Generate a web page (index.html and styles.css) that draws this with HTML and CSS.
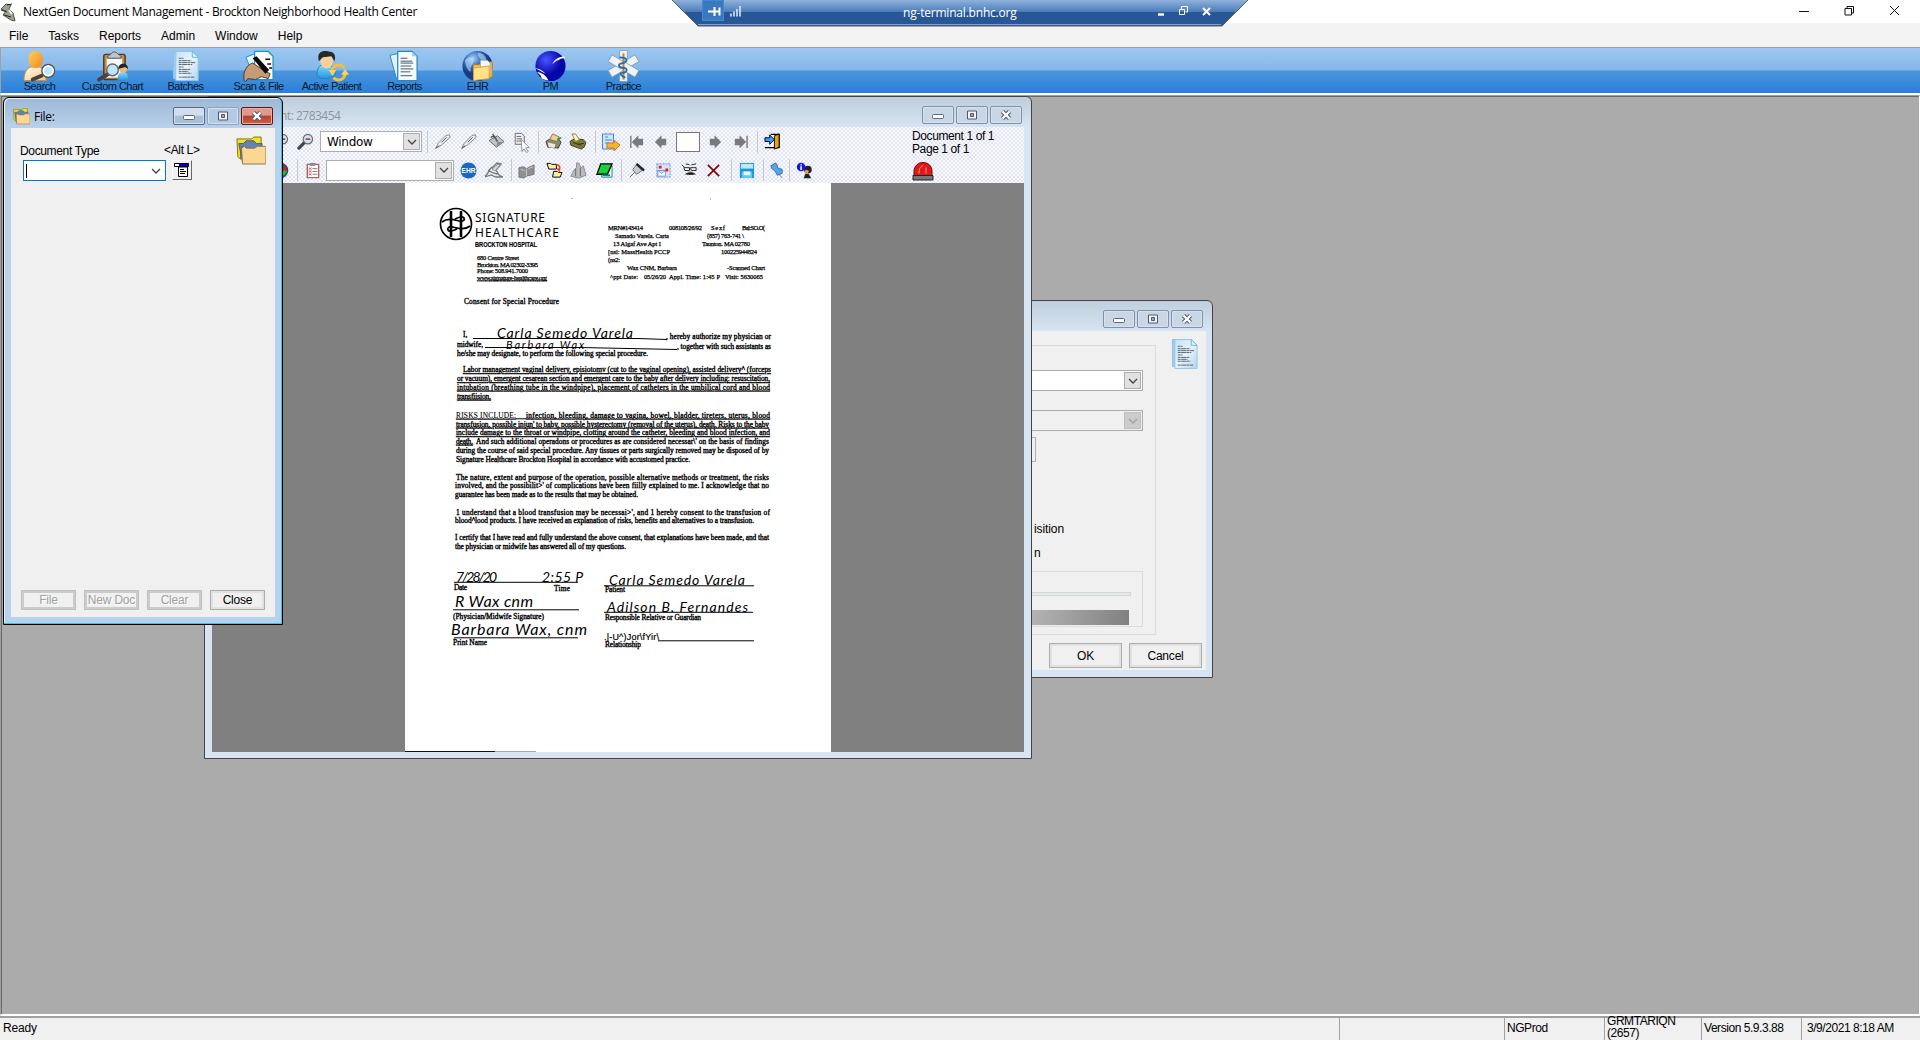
FILE: index.html
```html
<!DOCTYPE html>
<html lang="en">
<head>
<meta charset="utf-8">
<title>NextGen Document Management</title>
<link rel="stylesheet" href="styles.css">
</head>
<body>
<svg class="defs" aria-hidden="true">
  <defs>
    <linearGradient id="gold" x1="0" y1="0" x2="1" y2="1"><stop offset="0" stop-color="#ffd060"/><stop offset="1" stop-color="#f08a1c"/></linearGradient>
    <linearGradient id="cream" x1="0" y1="0" x2="1" y2="1"><stop offset="0" stop-color="#fff"/><stop offset="1" stop-color="#ffc070"/></linearGradient>
    <linearGradient id="paper" x1="0" y1="0" x2="1" y2="1"><stop offset="0" stop-color="#c4e2f6"/><stop offset=".5" stop-color="#e8f4fb"/><stop offset="1" stop-color="#b4d4ec"/></linearGradient>
    <linearGradient id="shirt" x1="0" y1="0" x2="0" y2="1"><stop offset="0" stop-color="#8fdcff"/><stop offset="1" stop-color="#2196dd"/></linearGradient>
    <radialGradient id="globe" cx=".35" cy=".25"><stop offset="0" stop-color="#a5d4fa"/><stop offset=".5" stop-color="#3c74c4"/><stop offset="1" stop-color="#173a86"/></radialGradient>
    <radialGradient id="ball" cx=".35" cy=".3"><stop offset="0" stop-color="#4a55ff"/><stop offset="1" stop-color="#0606a8"/></radialGradient>
    <symbol id="chev" viewBox="0 0 10 10"><path d="M1 3l4 4 4-4" fill="none" stroke="currentColor" stroke-width="1.3"/></symbol>
    <symbol id="lens" viewBox="0 0 18 18"><path d="M8 10l-6 6" stroke="#444" stroke-width="3.4" stroke-linecap="round"/><circle cx="11.500" cy="6.500" r="5" fill="#c4e6f8" stroke="#666" stroke-width="1.2"/></symbol>
    <symbol id="doc" viewBox="0 0 28 32"><path d="M1.500 1h20v28h-20z" fill="#9fcdee" stroke="#8cc0e6"/><path d="M4 1h17l6 6v24H4z" fill="url(#paper)" stroke="#8fc6ea"/><path d="M21 1v6h6z" fill="#eaf7ff" stroke="#5ab6e8"/><path d="M7 8h5M7 10.500h13M7 12.500h17M7 14.500h14M7 17h5M7 19.500h12M7 21.500h10M7 23.500h13M7 27.500h16" stroke="#4a525a" stroke-width=".9" stroke-dasharray="3 .5 5 .4"/></symbol>
    <symbol id="folders" viewBox="0 0 32 32"><path d="M1 3h16l2-2h8v9H5v15l-3-3z" fill="#f2e418" stroke="#77700d"/><path d="M3 8l5 0 3-3h8l3 3h6v8l-3 12H7z" fill="#6480b4" stroke="#4b587a"/><path d="M5 11h5v3H7v14z" fill="#8c6a3b"/><path d="M6 13l1 17h25V11h-9l-3 2h-9l-2-2z" fill="#fad792" stroke="#8c7450"/></symbol>
    <symbol id="min" viewBox="0 0 14 12"><rect x="1.500" y="5.500" width="11" height="4" rx="1" fill="#fff" stroke="#5b6680"/></symbol>
    <symbol id="max" viewBox="0 0 14 12"><path d="M2.500 2h9v8h-9z" fill="#f2f4f8" stroke="#4d566c"/><path d="M5.500 4.500h3v3h-3z" fill="#9ab" stroke="#4d566c"/></symbol>
    <symbol id="x" viewBox="0 0 14 12"><path d="M3.500 2.500l7 7M10.500 2.500l-7 7" stroke="#4d566c" stroke-width="4.400"/><path d="M3.500 2.500l7 7M10.500 2.500l-7 7" stroke="#fff" stroke-width="2.400"/></symbol>
    <symbol id="pen" viewBox="0 0 20 20"><path d="M2 18l3-6L14 3l4-1 1 3-10 9z" fill="#ededed" stroke="#777"/><path d="M2 18l4-3M9 11l6-6" stroke="#444"/></symbol>
    <symbol id="arrow" viewBox="0 0 14 14"><path d="M1 7l7-7v3.500h5v7H8V14z" fill="#7a7a7a"/></symbol>
  </defs>
</svg>

<header class="titlebar">
  <svg class="app" viewBox="0 0 17 19"><path d="M6 1L1 6l5 2-3 4 8 5 4 1-2-8-4-4 2-4z" fill="#9ba294" stroke="#555"/><path d="M7 2l5-1M1 7l6 2M4 12l7 2" stroke="#222"/><path d="M9 7l3 4" stroke="#eee" stroke-width="2"/></svg>
  <span class="apptitle">NextGen Document Management - Brockton Neighborhood Health Center</span>
  <svg class="winctl" viewBox="0 0 120 22"><g fill="none" stroke="#111"><path d="M5 10.500h10M51 7.500h6.500v6.500H51zM53 7V5.500h6.500V12H58M96 5l9 9M105 5l-9 9"/></g></svg>
</header>
<div class="rdp">
  <svg viewBox="0 0 578 27" width="578" height="27">
    <defs><linearGradient id="rb" x1="0" y1="0" x2="0" y2="1"><stop offset="0" stop-color="#8eb1dc"/><stop offset=".46" stop-color="#4b7cb8"/><stop offset=".47" stop-color="#285798"/><stop offset="1" stop-color="#285798"/></linearGradient></defs>
    <path d="M0 0h576l-26 26H26z" fill="url(#rb)"/><path d="M0 0l26 26h524l26-26" fill="none" stroke="#5b5b63"/><path d="M26 24.500h523" stroke="#7ba0da"/>
    <rect x="30.500" y=".5" width="21" height="20" fill="#3b78bd" stroke="#3d8bd8"/>
    <path d="M36 11.500h6M42.500 7v9M43 11.500h5M47.500 7.500v8" stroke="#fff" stroke-width="2" fill="none"/>
    <path d="M59 16.500v-3M62 16.500v-5M65 16.500V9M68 16.500V6" stroke="#dce8f8" stroke-width="1.600"/>
    <g stroke="#fff" fill="none"><path d="M486 14.500h6" stroke-width="2.400"/><path d="M507.500 9.500h5v5h-5zM509.500 9V6.500h6V12h-2"/><path d="M531 8l7 7M538 8l-7 7" stroke-width="2"/></g>
  </svg>
  <span>ng-terminal.bnhc.org</span>
</div>
<nav class="menu"><span>File</span><span>Tasks</span><span>Reports</span><span>Admin</span><span>Window</span><span>Help</span></nav>

<section class="ribbon">
  <div class="tool"><svg viewBox="0 0 34 32"><path d="M1 31c0-9 4-14 8-14h8c4 1 6 7 7 14z" fill="url(#cream)" stroke="#d98b25"/><ellipse cx="13" cy="9" rx="7.500" ry="9" fill="url(#gold)"/><path d="M19 26l-9 4" stroke="#444" stroke-width="4" stroke-linecap="round"/><circle cx="26" cy="21" r="6.600" fill="#bfe6fb" stroke="#555" stroke-width="1.500"/><circle cx="26" cy="21" r="5" fill="none" stroke="#fff" stroke-width="1.500"/></svg><b>Search</b></div>
  <div class="tool"><svg viewBox="0 0 34 32"><rect x="8" y="4" width="22" height="26" rx="2" fill="#c98a42" stroke="#4f3a24" stroke-width="1.500"/><path d="M11 8h16v20H11z" fill="#f7fafc"/><path d="M12 8c0-4 3-3 4-5s5-2 6 0 4 1 4 5z" fill="#bfc4c8" stroke="#555"/><path d="M13 24l-10 6" stroke="#444" stroke-width="4" stroke-linecap="round"/><circle cx="17" cy="20" r="6" fill="#bfe6fb" stroke="#667" stroke-width="1.500"/><path d="M22 31c0-7 3-9 6-9s5 2 5 9z" fill="url(#shirt)"/><circle cx="28" cy="19" r="4" fill="#f1b67a"/><path d="M23 19c0-7 10-7 10 0l-3-2z" fill="#222"/></svg><b>Custom Chart</b></div>
  <div class="tool"><svg viewBox="0 0 34 32"><use href="#doc" x="3" width="28" height="32"/></svg><b>Batches</b></div>
  <div class="tool"><svg viewBox="0 0 34 32"><path d="M4 7l10-4 8 22-9 3z" fill="#e6f6ff" stroke="#1c94cc"/><path d="M13 1h14l5 5v24H13z" fill="#fff" stroke="#1c94cc" stroke-width="1.300"/><path d="M24 9h5M26 14h4M28 18h3" stroke="#111" stroke-width="1.500"/><path d="M2 31V24c2-8 6-10 9-11l12 8 6 3-2 5-7-2-6 3-8-1-2 3z" fill="#c69c74" stroke="#4a382a"/><path d="M11 8l4-2 13 14-4 4z" fill="#0a0a0a"/></svg><b>Scan &amp; File</b></div>
  <div class="tool"><svg viewBox="0 0 34 32"><path d="M2 25c0-8 4-11 9-11s10 3 10 12l-9 3c-6 0-10-1-10-4z" fill="url(#shirt)" stroke="#1d85c8"/><ellipse cx="12" cy="11" rx="6.500" ry="7.500" fill="#fbd09a"/><path d="M4 11C1 0 10 0 14 1c6 0 8 5 6 10l-3-5-9 1z" fill="#262a2c"/><path d="M18 22c0-8 9-9 12-4M31 23c0 8-8 9-12 5" fill="none" stroke="#f8c030" stroke-width="3"/><path d="M14 20h8l-4 6zM27 25h8l-4-6z" fill="#ffd552"/></svg><b>Active Patient</b></div>
  <div class="tool"><svg viewBox="0 0 34 32"><path d="M2 5l9-2 6 25-8 2z" fill="#dff2fc" stroke="#2e86b8"/><path d="M10 1h15l5 5v25H10z" fill="#f4fbff" stroke="#2e86b8" stroke-width="1.300"/><path d="M25 1v5h5z" fill="#8fd2f2"/><path d="M13 8h7M13 11h12M13 13h13M13 16h11M13 19h13M13 22h10M13 26h12" stroke="#456"/></svg><b>Reports</b></div>
  <div class="tool"><svg viewBox="0 0 34 32"><circle cx="17" cy="16" r="15.500" fill="url(#globe)"/><path d="M4 10c4-5 8-3 9 0s-4 6-3 10-5 0-6-10zM17 2c4 0 9 3 9 7s-8 1-9-7z" fill="#cfe8fc" opacity=".55"/><path d="M13 15h6l2-3h11v15l-19 3z" fill="#ffc845" stroke="#e08a12"/><path d="M20 10h7l3 3v12H20z" fill="#f4faff" stroke="#8ac"/><path d="M13 18l16-2v13l-16 2z" fill="#ffe28a" stroke="#e69c22"/></svg><b>EHR</b></div>
  <div class="tool"><svg viewBox="0 0 34 32"><circle cx="17" cy="16" r="15.500" fill="url(#ball)"/><path d="M31 6c-7 1-10 4-12 8l6-5-3 5c2-4 5-6 10-6zM3 22c5 1 9 3 12 9-3 0-4-1-7-2l-1-3zM1 18c6 1 8 3 11 6" fill="#fff"/></svg><b>PM</b></div>
  <div class="tool"><svg viewBox="0 0 34 32"><g fill="#f0f2f4" stroke="#7890a8" stroke-width=".7"><path d="M13 0h8v32h-8z"/><path d="M13 0h8v32h-8z" transform="rotate(60 17 16)"/><path d="M13 0h8v32h-8z" transform="rotate(-60 17 16)"/></g><path d="M14 12h6v8h-6z" fill="#f0f2f4"/><path d="M17 3v27" stroke="#c87a2a" stroke-width="2"/><path d="M13 7c9 0 9 5 3 6s-4 5 1 5 4 5-1 5 0 4 3 5" fill="none" stroke="#1b6fb0" stroke-width="1.800"/></svg><b>Practice</b></div>
</section>

<main class="mdi">
  <section class="win acquire">
    <div class="cap"><i><svg><use href="#min"/></svg></i><i><svg><use href="#max"/></svg></i><i><svg><use href="#x"/></svg></i></div>
    <div class="client">
      <div class="group">
        <div class="combo wide"><u><svg><use href="#chev"/></svg></u></div>
        <div class="combo wide off"><u><svg><use href="#chev"/></svg></u></div>
        <div class="stub"></div>
        <div class="opt first">isition</div>
        <div class="opt">n</div>
        <div class="inner"><div class="track"></div><div class="shade"></div></div>
      </div>
      <svg class="docicon"><use href="#doc"/></svg>
      <div class="actions"><button>OK</button><button>Cancel</button></div>
    </div>
  </section>

  <section class="win viewer">
    <div class="cap"><span>nt: 2783454</span><i><svg><use href="#min"/></svg></i><i><svg><use href="#max"/></svg></i><i><svg><use href="#x"/></svg></i></div>
    <div class="bars">
      <div class="rows">
        <div class="row r1">
          <svg viewBox="0 0 18 18"><use href="#lens"/><path d="M9 6.500h5" stroke="#e01010" stroke-width="1.500"/></svg>
          <svg viewBox="0 0 18 18"><use href="#lens"/><path d="M9 6.500h5" stroke="#e01010" stroke-width="1.500"/></svg>
          <div class="combo"><em>Window</em><u><svg><use href="#chev"/></svg></u></div>
          <hr>
          <svg><use href="#pen"/></svg>
          <svg><use href="#pen"/></svg>
          <svg viewBox="0 0 18 18"><path d="M1 8l9-5 7 6-8 6z" fill="#c4c4c4" stroke="#666"/><path d="M5 1l5 8M3 5c2-3 5 0 6 3" stroke="#555" fill="none" stroke-width="1.500"/><path d="M10 9l5 1-6 4z" fill="#888"/></svg>
          <svg class="big" viewBox="0 0 22 22"><path d="M3.500 1.500h7l3 3v9h-10zM5 5h5M5 7.500h6M5 10h6" fill="#eee" stroke="#666"/><path d="M10 8l9 9-4 .5 3 4-2 1-3-4-2 3z" fill="#fff" stroke="#888"/></svg>
          <hr>
          <svg viewBox="0 0 18 18"><path d="M1 9l5-3 9 1 2 3-3 6-11-1z" fill="#8d8a70" stroke="#3c3c30"/><path d="M5 7l3-6 7 3-2 5z" fill="#f0cf94" stroke="#8a7450"/><path d="M3 10l8 2-1 4-6-1z" fill="#e9e9df"/><path d="M13 7l4-2" stroke="#2b9c2b" stroke-width="2"/></svg>
          <svg viewBox="0 0 18 18"><path d="M1 9l5-3 9 1 3 3-2 5-3 2-11-4z" fill="#7b7a3c" stroke="#3c3c18"/><path d="M3 1l4 0 4 6-4 2z" fill="#fff7ae" stroke="#8a8450"/><path d="M9 12l7-1M4 10l9 3" stroke="#33330c"/></svg>
          <hr>
          <svg class="big" viewBox="0 0 20 20"><path d="M2.500 2h11v15h-11z" fill="#cde4fa" stroke="#4b86c8"/><path d="M5 5h3M5 8h7M5 11h4" stroke="#4b86c8"/><path d="M7 11h7V8l6 5-6 6v-3H7z" fill="#f8b23a" stroke="#c67c14"/></svg>
          <svg viewBox="0 0 18 18"><path d="M3 3v13" stroke="#7a7a7a" stroke-width="1.500"/><use href="#arrow" x="3" y="2.500" width="14" height="14"/></svg>
          <svg viewBox="0 0 18 18"><use href="#arrow" x="1" y="2.500" width="14" height="14"/></svg>
          <div class="pagebox"></div>
          <svg viewBox="0 0 18 18"><use href="#arrow" x="2" y="2.500" width="14" height="14" transform="matrix(-1 0 0 1 18 0)"/></svg>
          <svg viewBox="0 0 18 18"><g transform="matrix(-1 0 0 1 18 0)"><path d="M1 3v13" stroke="#7a7a7a" stroke-width="1.500"/><use href="#arrow" x="1" y="2.500" width="14" height="14"/></g></svg>
          <hr>
          <svg viewBox="0 0 18 18"><path d="M7 1.500h9v14H7M1 15.500h7" fill="#fff" stroke="#000" stroke-width="1.300"/><path d="M11 3l5-2v14l-5 2z" fill="#eea010" stroke="#000"/><path d="M1 5h5V2l5 5-5 5V9H1z" fill="#35a0f0" stroke="#003"/></svg>
        </div>
        <div class="row r2">
          <svg viewBox="0 0 18 18"><circle cx="9" cy="9" r="7.500" fill="#e11" stroke="#13508c" stroke-width="1.500"/><path d="M9 9h6.500A6.500 6.500 0 019 15.500z" fill="#0c2"/></svg>
          <hr>
          <svg viewBox="0 0 16 18"><path d="M2.500 2.500h12v14h-12z" fill="#fff" stroke="#b0655a" stroke-width="1.500"/><path d="M5 1h6v3H5z" fill="#888"/><path d="M8 7h5M8 10h5M8 13h5" stroke="#777"/><path d="M4 6l3 2M7 6l-3 2M4 9l3 2M7 9l-3 2M4 12l3 2M7 12l-3 2" stroke="#e33" stroke-width=".8"/></svg>
          <div class="combo"><u><svg><use href="#chev"/></svg></u></div>
          <svg viewBox="0 0 18 18"><circle cx="9" cy="9" r="8.500" fill="#1a68c4"/><text x="9" y="12" text-anchor="middle" class="ehr">EHR</text></svg>
          <svg class="big" viewBox="0 0 20 20"><path d="M1 16c4-1 3-8 8-9l4-4 4 1-5 6 3 5 4 2M4 10l5 3 5 1M1 17l6-2 5 2h7" fill="none" stroke="#777" stroke-width="1.300"/><path d="M8 9l6-5 2 1-5 6z" fill="#ddd" stroke="#888"/></svg>
          <hr>
          <svg viewBox="0 0 18 18"><path d="M1 6l5-1 3 2 8-4v10l-8 2-3 2-5-1z" fill="#8f8f8f" stroke="#777"/><path d="M9 7v8M3 8l4 1M11 7l5-2" stroke="#ccc"/></svg>
          <svg viewBox="0 0 18 18"><path d="M1 1.500h4l1 1h5v5H3zM8 10h4l1 1h4l-2 5H7z" fill="#fff0a0" stroke="#000"/><path d="M11 3c4 0 4 3 3 6l-2-2" fill="none" stroke="#e64a10" stroke-width="1.800"/></svg>
          <svg viewBox="0 0 18 18"><path d="M1 15l3-6 3-3V1h2l3 5 2-2 3 10-8 3z" fill="#bbb" stroke="#888"/><path d="M6 7v8M11 6v9" stroke="#666"/></svg>
          <svg viewBox="0 0 18 18"><path d="M6 4h11v12H6z" fill="#fff" stroke="#088"/><path d="M5 2h12l-5 11H1z" fill="#1bd13b" stroke="#000" stroke-width="1.400"/><path d="M7 14h8" stroke="#088" stroke-width="2"/></svg>
          <hr>
          <svg viewBox="0 0 18 18"><path d="M2 16l5-5" stroke="#555"/><path d="M5 8l4-5 6 6-6 4z" fill="#ccc" stroke="#666"/><path d="M9 2l8 7" stroke="#222" stroke-width="2.500"/></svg>
          <svg viewBox="0 0 18 18"><path d="M2 2h14v14H2z" fill="#d7e3fa" stroke="#6a8ad8" stroke-dasharray="2 1"/><path d="M3 9h8v6H3zM3 9l4 3 4-3" fill="#fff" stroke="#7c90c0"/><path d="M4 4h3v3H4zM11 7h3v3h-3z" fill="#e12020"/></svg>
          <svg viewBox="0 0 18 18"><path d="M1 3l3 3M3 6h6v3H4zM10 6h6v3h-5zM5 2l4 1M11 3l5-1" fill="#dff" stroke="#222"/><path d="M9 9h2l2 3H7z" fill="#e8a880"/><path d="M4 13c3-3 9-3 12 0-4 1-8 1-12 0z" fill="#222"/></svg>
          <svg viewBox="0 0 18 18"><path d="M3 3l12 12M15 3L3 15" stroke="#8d0000" stroke-width="1.800"/></svg>
          <hr>
          <svg viewBox="0 0 18 18"><path d="M2 1h15v16H2z" fill="#1c96dc"/><path d="M3 2h13v5H3z" fill="#bfe6fa"/><path d="M4 10h11v7H4z" fill="#64c4f2"/><path d="M6 10h7v4H6z" fill="#e8f8ff"/></svg>
          <hr>
          <svg viewBox="0 0 18 18"><path d="M9 10l6 7" stroke="#777"/><path d="M3 4l5-3 2 3 0 2 5 2 0 4-5 2-3-5-3-2z" fill="#5ba4e6" stroke="#2a6cb0"/></svg>
          <hr>
          <svg viewBox="0 0 20 20"><circle cx="14" cy="9" r="4.500" fill="#222"/><path d="M11 9l4 1-1 5-4-1z" fill="#e0a060"/><path d="M9 19l2-5h4l3 5z" fill="#222"/><circle cx="6" cy="6" r="5" fill="#1414e6"/><path d="M6 2.500v1.500M6 5v4.500" stroke="#fff" stroke-width="1.800"/></svg>
        </div>
      </div>
      <div class="info">Document 1 of 1<br>Page 1 of 1
        <svg viewBox="0 0 22 18"><path d="M2 13V9c0-12 18-12 18 0v4z" fill="#e01818" stroke="#700"/><path d="M7 11c0-4 1-7 4-8M14 11V5" stroke="#ff8a8a" fill="none"/><path d="M1 13h20v4.500H1z" fill="#777" stroke="#222"/></svg>
      </div>
    </div>
    <div class="canvas">
      <svg class="scan" viewBox="405 183 426 569">
        <g fill="none" stroke="#000" stroke-width="1.700"><circle cx="456" cy="224" r="15.500"/><path d="M451 211v26M461 211v26" stroke-width="2.600"/><path d="M442 222c6-5 13-2 17-1s6-1 5-3-5-1-9 1M470 226c-6 5-13 2-17 1s-6 1-5 3 5 1 9-1"/></g>
        <path d="M572 198v1M710 199h1" stroke="#777"/>
        <g class="brand"><text x="475" y="222" textLength="70">SIGNATURE</text><text x="475" y="237" textLength="84">HEALTHCARE</text></g>
        <text class="hosp" x="475" y="247" textLength="62" lengthAdjust="spacingAndGlyphs">BROCKTON HOSPITAL</text>
        <g class="small">
          <text x="477" y="260" textLength="42">680 Centre Street</text><text x="477" y="266.500" textLength="61">Brockton. MA 02302-3395</text><text x="477" y="273" textLength="51">Phone: 508.941.7000</text><text x="477" y="279.500" textLength="70" class="ul">www.signature-healthcare.org</text>
          <text x="608" y="230" textLength="35">MRN#143414</text><text x="669" y="230" textLength="33">008108/26/92</text><text x="711" y="230" textLength="14">Sexf</text><text x="742" y="230" textLength="23">Bal:SO.O(</text>
          <text x="615" y="238" textLength="54">Samado Varela.  Carta</text><text x="707" y="238" textLength="37">(857) 763-741 \</text>
          <text x="613" y="246" textLength="48">13 Algaf Ave Apt I</text><text x="702" y="246" textLength="48">Taunton.  MA  02780</text>
          <text x="608" y="254" textLength="62">[nsl: MassHealth PCCP</text><text x="721" y="254" textLength="36">100225944824</text>
          <text x="608" y="262" textLength="12">(ns2:</text>
          <text x="627" y="270" textLength="50">Wax CNM, Barbara</text><text x="727" y="270" textLength="38">-Scanned Chart</text>
          <text x="610" y="279" textLength="28">^ppt  Date:</text><text x="644" y="279" textLength="22">05/26/20</text><text x="669" y="279" textLength="51">Appl.  Time:  1:45 P</text><text x="725" y="279" textLength="38">Visit: 5630065</text>
        </g>
        <g class="body">
          <text x="464" y="304" textLength="95">Consent for Special Procedure</text>
          <text x="463" y="337">I,</text><path d="M473 338.500h165l29 1"/><text x="666" y="339" textLength="105">, hereby authorize my physician or</text>
          <text x="457" y="347" textLength="26">midwife,</text><path d="M485 347.500h95l97 2"/><text x="677" y="349" textLength="94">, together with such assistants as</text>
          <text x="457" y="356" textLength="191">he/she may designate, to perform the following special procedure.</text>
        </g>
        <g class="body" transform="translate(0 -.7)">
          <g class="ul">
          <text x="463" y="373" textLength="308">Labor management vaginal delivery, episiotomv (cut to the vaginal opening), assisted delivery^ (forceps</text>
          <text x="457" y="382" textLength="313">or vacuum), emergent cesarean section and emergent care to the baby after delivery including: resuscitation,</text>
          <text x="457" y="390.500" textLength="313">intubation (breathing tube in the windpipe), placement of catheters in the umbilical cord and blood</text>
          <text x="457" y="399.500" textLength="34">transfiision.</text>
          <text x="456" y="418.500" textLength="60" class="reg">RISKS  INCLUDE:</text><text x="526" y="418.500" textLength="244">infection, bleeding, damage to vagina, bowel, bladder, tireters, uterus, blood</text>
          <text x="456" y="427.500" textLength="313">transfusion, possible injun' to baby, possible hysterectomy (removal of the uterus), death. Risks to the baby</text>
          <text x="456" y="436" textLength="314">include damage to the throat or windpipe, clotting around the catheter, bleeding and blood infection, and</text>
          <text x="456" y="444.500" textLength="17">death.</text></g>
          <path d="M516 419.500h10"/>
          <text x="476" y="444.500" textLength="293">And such additional operadons or procedures as are considered necessar\' on the basis of findings</text>
          <text x="456" y="453.500" textLength="313">during the course of said special procedure.  Any tissues or parts surgically removed may be disposed of by</text>
          <text x="456" y="462.500" textLength="234">Signature Healthcare Brockton Hospital in accordance with accustomed practice.</text>
          <text x="456" y="480.500" textLength="313">The nature, extent and purpose of the operation, possible alternative methods or treatment, the risks</text>
          <text x="455" y="488.500" textLength="314">involved, and the possibilit&gt;' of complications have been fiilly explained to me.  I acknowledge that no</text>
          <text x="455" y="497.500" textLength="183">guarantee has been made as to the results that may be obtained.</text>
          <text x="456" y="515.500" textLength="314">1 understand that a blood transfusion may be necessai&gt;', and 1 hereby consent to the transfusion of</text>
          <text x="455" y="524" textLength="299">blood^lood products.  I have received an explanation of risks, benefits and alternatives to a transfusion.</text>
          <text x="455" y="541" textLength="314">I certify that I have read and fully understand the above consent, that explanations have been made, and that</text>
          <text x="455" y="549.500" textLength="171">the physician or midwife has answered all of my questions.</text>
          <path d="M454 583h124M453 610.500h126M454 638.500h124M604 586.500h150M604 613h149M658 641.500h96"/>
          <text x="454" y="591" textLength="13">Date</text><text x="554" y="592" textLength="16">Time</text><text x="605" y="592.500" textLength="20">Patient</text>
          <text x="453" y="619.500" textLength="91">(Physician/Midwife Signature)</text><text x="605" y="621" textLength="96">Responsible Relative or Guardian</text>
          <text x="453" y="646" textLength="34">Print Name</text><text x="605" y="648" textLength="36">Relationship</text>
        </g>
        <text x="604" y="640" class="odd" textLength="55">.|-U^)Jor\fYir\</text>
        <g class="hand">
          <text x="497" y="338" textLength="136">Carla  Semedo  Varela</text><text x="506" y="348.500" textLength="78" class="sm">Barbara  Wax</text>
          <text x="456" y="581.500" textLength="41">7/28/20</text><text x="542" y="581.500" textLength="41">2:55 P</text>
          <text x="609" y="584.500" textLength="136">Carla  Semedo  Varela</text><text x="455" y="607" textLength="78" class="lg">R Wax cnm</text>
          <text x="607" y="611.500" textLength="141">Adilson  B. Fernandes</text><text x="451" y="635" textLength="136" class="lg">Barbara Wax, cnm</text>
        </g>
        <path d="M405 751.500h90" stroke="#111"/><path d="M495 751.500h41" stroke="#aaa"/>
      </svg>
    </div>
  </section>

  <section class="win filewin">
    <div class="cap"><svg class="fi"><use href="#folders"/></svg><strong>File:</strong><i><svg><use href="#min"/></svg></i><i class="dim"><svg><use href="#max"/></svg></i><i class="red"><svg><use href="#x"/></svg></i></div>
    <div class="client">
      <div class="form">
        <div class="field"><label>Document Type</label><div class="pick"><span></span><svg><use href="#chev"/></svg></div></div>
        <div class="field alt"><label>&lt;Alt L&gt;</label><div class="listbtn"><svg viewBox="0 0 16 14"><path d="M.5.500h14v3H.5z" fill="#0000d8" stroke="#000"/><path d="M1 1h4v2H1z" fill="#fff"/><path d="M4.500 4h9v9.500h-9z" fill="#fff" stroke="#000"/><path d="M6 6.500h4M6 8.500h6M6 10.500h5" stroke="#000"/></svg></div></div>
        <svg class="bigfold"><use href="#folders"/></svg>
      </div>
      <div class="actions"><button disabled>File</button><button disabled>New Doc</button><button disabled>Clear</button><button>Close</button></div>
    </div>
  </section>
</main>

<footer class="status"><span>Ready</span><span></span><span>NGProd</span><span class="two">GRMTARIQN (2657)</span><span>Version 5.9.3.88</span><span>3/9/2021 8:18 AM</span></footer>
</body>
</html>
```
FILE: styles.css
```css
* { box-sizing: border-box; }
body {
  margin: 0; width: 1920px; height: 1040px; overflow: hidden;
  display: grid; grid-template-rows: 23px 24px 48px 921px 24px;
  font: 12px "Liberation Sans", Arial, sans-serif; color: #000; background: #f0f0f0;
  position: relative;
}
.defs { position: absolute; width: 0; height: 0; }

.titlebar { background: #fff; display: flex; align-items: center; }
.app { width: 17px; height: 19px; margin: 1px 6px 0 0; }
.apptitle { font: 12px "Open Sans", sans-serif; letter-spacing: -0.31px; white-space: nowrap; }
.winctl { width: 120px; height: 22px; margin-left: auto; margin-right: 6px; }

.rdp { position: absolute; left: 672px; top: 0; width: 578px; height: 27px; z-index: 5; }
.rdp svg { display: block; }
.rdp span {
  position: absolute; left: 231px; top: 4px; color: #fff;
  font: 12px/18px "Open Sans", sans-serif; letter-spacing: -0.2px;
}

.menu { display: flex; gap: 20px; padding: 5px 9px 0; background: #f3f3f3; line-height: 16px; }

.ribbon {
  display: flex; padding: 2px 0 0 2px;
  border-top: 1px solid #a0a0a0; border-left: 1px solid #a0a0a0; border-bottom: 2px solid #fff;
  background: linear-gradient(#9dc7f1 0, #84b8ea 22px, #4d95dd 23px, #2880d8 45px);
}
.tool { width: 73px; display: flex; flex-direction: column; align-items: center; }
.tool svg { width: 33px; height: 32px; flex: none; overflow: visible; }
.tool b { font-weight: 400; font-size: 11px; line-height: 11px; letter-spacing: -0.55px; margin-top: -1px; white-space: nowrap; color: #06182c; }

.mdi {
  position: relative; background: #ababab; border: 1px solid #a0a0a0; border-right: 1px solid #fff; border-bottom: 2px solid #fff;
  box-shadow: inset 1px 1px #696969; overflow: hidden;
}

/* windows on the desktop */
.win { position: absolute; display: flex; flex-direction: column; border: 1px solid #444; border-radius: 6px 6px 0 0; }
.cap { display: flex; justify-content: flex-end; flex: none; }
.cap i {
  width: 32px; height: 18px; margin-left: 2px; border: 1px solid #8290b0; border-radius: 2px;
  display: flex; align-items: center; justify-content: center; box-shadow: inset 0 0 0 1px #d6e1ee;
  background: #c9d6e4;
}
.cap i svg { width: 14px; height: 12px; }
.client { flex: 1; background: #f0f0f0; display: flex; }
button {
  font: 12px "Liberation Sans", Arial, sans-serif; padding: 0; color: #000; background: #f0f0f0;
  border: 1px solid #adadad; box-shadow: inset 0 0 0 2px #e1e1e1; border-radius: 0; letter-spacing: -0.2px;
}
.combo { display: flex; align-items: center; height: 21px; border: 1px solid #abadb3; background: #fff; padding: 1px; }
.combo em { font: 12px "DejaVu Sans", sans-serif; padding-left: 5px; letter-spacing: -0.3px; }
.combo u { width: 17px; height: 17px; margin-left: auto; background: #e1e1e1; border: 1px solid #adadad; display: flex; align-items: center; justify-content: center; color: #444; }
.combo u svg { width: 10px; height: 10px; }

.acquire { left: 900px; top: 204px; width: 312px; height: 378px; background: linear-gradient(#c0cfdd, #d7e4f2 30px); padding: 0 6px 7px; }
.acquire .cap { height: 30px; padding: 9px 3px 0 0; }
.acquire .client { display: grid; grid-template-columns: 248px 52px; grid-template-rows: 304px 35px; }
.acquire .group { margin: 14px 0 0 7px; border: 1px solid #dcdcdc; padding: 24px 12px 0 0; height: 290px; }
.wide + .wide { margin-top: 19px; }
.wide.off { background: #f0f0f0; }
.off u { background: #ccc; border-color: #bfbfbf; color: #a0a0a0; }
.stub { width: 120px; height: 25px; margin-top: 6px; border: 1px solid #adadad; }
.opt { padding-left: 118px; line-height: 16px; height: 24px; letter-spacing: -0.1px; }
.opt.first { margin-top: 59px; }
.inner { border: 1px solid #dcdcdc; height: 56px; margin-top: 2px; padding-top: 20px; }
.track { width: 214px; height: 4px; border: 1px solid #d0d6d6; background: #e7eaea; }
.shade { width: 212px; height: 15px; margin-top: 14px; background: linear-gradient(100deg, #f0f0f0, #808080); }
.docicon { width: 27px; height: 32px; margin: 7px 0 0 15px; }
.acquire .actions { grid-column: 1 / 3; display: flex; justify-content: flex-end; gap: 7px; padding: 8px 6px 0 0; }
.acquire .actions button { width: 73px; height: 25px; }

.viewer { left: 203px; top: 0; width: 828px; height: 663px; background: linear-gradient(#bfcddb, #d7e4f2 30px); padding: 0 7px; }
.viewer .cap { height: 30px; padding: 9px 2px 0 0; }
.viewer .cap span { width: 560px; margin-right: auto; padding-left: 68px; font: 12px "Open Sans", sans-serif; color: #8d949c; line-height: 19px; letter-spacing: -0.5px; white-space: nowrap; }
.bars {
  height: 56px; display: flex; flex: none; background-color: #fcfcff;
  background-image: radial-gradient(#dfe4fb 0.8px, transparent 1px), radial-gradient(#dfe4fb 0.8px, transparent 1px);
  background-size: 4px 4px; background-position: 0 0, 2px 2px;
}
.rows { width: 700px; }
.row { display: grid; align-items: center; justify-items: center; padding-left: 58px; height: 29px; }
.r1 { grid-template-columns: 20px 30px 102px 10px 20px 32px 24px 28px 4px 26px 22px 14px 16px 36px 14px 40px 15px 32px 4px 26px; }
.r2 { grid-template-columns: 20px 14px 16px 140px 17px 33px 2px 28px 28px 20px 32px 2px 28px 26px 26px 22px 14px 16px 18px 8px 18px 12px; height: 28px; }
.row > svg { width: 17px; height: 17px; overflow: visible; }
.row > svg.big { width: 20px; height: 20px; }
.row hr { width: 1px; height: 22px; margin: 0; border: 0; background: #c6c8d0; }
.r1 .combo { width: 102px; }
.r2 .combo { width: 128px; }
.pagebox { width: 24px; height: 20px; background: #fff; border: 1px solid #777; }
.ehr { font: bold 7px "Liberation Sans", sans-serif; fill: #fff; }
.info { padding-top: 3px; line-height: 13px; letter-spacing: -0.4px; }
.info svg { display: block; width: 22px; height: 19px; margin-top: 6px; }
.canvas { background: #808080; height: 569px; padding-left: 193px; }
.scan { display: block; width: 426px; height: 569px; background: #fff; }
.brand { font: 12px "Noto Sans", sans-serif; }
.hosp { font: bold 8px "Liberation Sans", sans-serif; stroke: #000; stroke-width: 0.2px; }
.small { font: 6.5px "Liberation Serif", serif; stroke: #000; stroke-width: 0.25px; }
.body { font: 7.4px "Liberation Serif", serif; stroke: #000; stroke-width: 0.35px; }
.body path { stroke-width: 1px; fill: none; }
.reg { stroke-width: 0.1px; }
.ul { text-decoration: underline; text-decoration-thickness: 1px; }
.odd { font: 9px "Liberation Sans", sans-serif; stroke: #000; stroke-width: 0.2px; }
.hand { font: italic 14px "Lato", sans-serif; fill: #000; }
.hand .sm { font-size: 11px; }
.hand .lg { font-size: 16px; }

.filewin {
  left: 2px; top: 1px; width: 280px; height: 528px; border-color: #000;
  background: linear-gradient(#9db8d6, #b9d1ea 30px);
  box-shadow: inset -1px -1px #36c3e8, inset 1px 1px #e8f2fb; padding: 0 7px 7px;
}
.filewin .cap { height: 30px; padding: 9px 2px 0 0; align-items: flex-start; }
.filewin .cap .fi { width: 17px; height: 17px; margin: 1px 4px 0 2px; }
.filewin .cap strong { font: 12px/19px "Open Sans", sans-serif; margin-right: auto; letter-spacing: -0.3px; }
.filewin .cap i { background: linear-gradient(#cfdded 45%, #a9bfd8 50%); border-color: #53688a; }
.filewin .cap i.dim { background: #b4cae2; border-color: #8ba3c2; }
.filewin .cap i.red { background: linear-gradient(#e09a8c 45%, #b8402a 50%, #c9604a); border-color: #5c1710; box-shadow: inset 0 0 0 1px #e8b0a4; }
.filewin .client { flex-direction: column; justify-content: space-between; padding: 7px 9px 7px 10px; }
.form { display: flex; }
.field { width: 146px; padding-top: 8px; }
.field label { display: block; line-height: 16px; letter-spacing: -0.35px; margin-left: -1px; }
.field.alt { padding-top: 7px; width: 68px; }
.alt label { margin-left: -2px; }
.pick { width: 143px; height: 21px; margin: 1px 0 0 2px; border: 1px solid #0078d7; background: #fff; display: flex; justify-content: space-between; align-items: center; padding: 0 4px 0 2px; }
.pick span { border-left: 1px solid #000; height: 14px; }
.pick svg { width: 10px; height: 10px; color: #444; }
.listbtn { width: 20px; height: 20px; margin: 2px 0 0 6px; border: 1px solid #fff; border-right-color: #696969; border-bottom-color: #696969; display: flex; align-items: center; justify-content: center; }
.listbtn svg { width: 16px; height: 14px; }
.bigfold { width: 32px; height: 32px; margin-left: 7px; }
.filewin .actions { display: flex; gap: 8px; }
.filewin .actions button { width: 55px; height: 20px; }
.filewin button:disabled { color: #a0a0a0; border-color: #bfbfbf; box-shadow: inset 0 0 0 2px #ccc; text-shadow: 1px 1px #fff; }

.status {
  display: grid; grid-template-columns: 1339px 165px 100px 97px 100px 1fr; align-items: stretch;
  border-top: 2px solid #a0a0a0; font-size: 12px; line-height: 20px; letter-spacing: -0.45px;
}
.status span { border-left: 1px solid #a0a0a0; padding-left: 2px; white-space: nowrap; overflow: hidden; }
.status span:first-child { border-left: 0; letter-spacing: -0.2px; padding-left: 3px; }
.status span:last-child { padding-left: 5px; }
.status .two { white-space: normal; line-height: 12px; margin-top: -3px; width: 86px; }
```
